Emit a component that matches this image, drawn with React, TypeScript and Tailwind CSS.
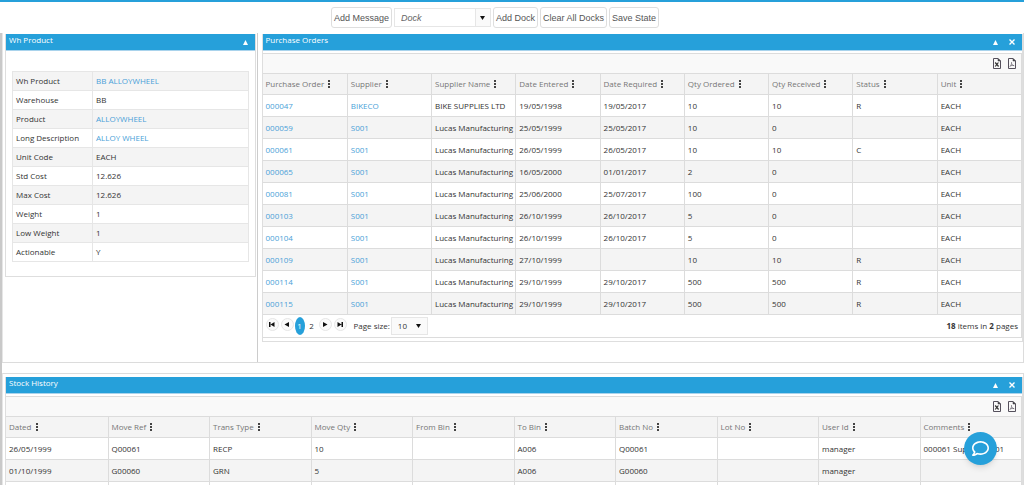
import { ReactNode } from 'react'
import { FaRegComment } from 'react-icons/fa'

const product = [
    { label: 'Wh Product', value: 'BB ALLOYWHEEL', link: true },
    { label: 'Warehouse', value: 'BB' },
    { label: 'Product', value: 'ALLOYWHEEL', link: true },
    { label: 'Long Description', value: 'ALLOY WHEEL', link: true },
    { label: 'Unit Code', value: 'EACH' },
    { label: 'Std Cost', value: '12.626' },
    { label: 'Max Cost', value: '12.626' },
    { label: 'Weight', value: '1' },
    { label: 'Low Weight', value: '1' },
    { label: 'Actionable', value: 'Y' },
]

const orderColumns = ['Purchase Order', 'Supplier', 'Supplier Name', 'Date Entered', 'Date Required', 'Qty Ordered', 'Qty Received', 'Status', 'Unit']

const orders = [
    ['000047', 'BIKECO', 'BIKE SUPPLIES LTD', '19/05/1998', '19/05/2017', '10', '10', 'R', 'EACH'],
    ['000059', 'S001', 'Lucas Manufacturing', '25/05/1999', '25/05/2017', '10', '0', '', 'EACH'],
    ['000061', 'S001', 'Lucas Manufacturing', '26/05/1999', '26/05/2017', '10', '10', 'C', 'EACH'],
    ['000065', 'S001', 'Lucas Manufacturing', '16/05/2000', '01/01/2017', '2', '0', '', 'EACH'],
    ['000081', 'S001', 'Lucas Manufacturing', '25/06/2000', '25/07/2017', '100', '0', '', 'EACH'],
    ['000103', 'S001', 'Lucas Manufacturing', '26/10/1999', '26/10/2017', '5', '0', '', 'EACH'],
    ['000104', 'S001', 'Lucas Manufacturing', '26/10/1999', '26/10/2017', '5', '0', '', 'EACH'],
    ['000109', 'S001', 'Lucas Manufacturing', '27/10/1999', '', '10', '10', 'R', 'EACH'],
    ['000114', 'S001', 'Lucas Manufacturing', '29/10/1999', '29/10/2017', '500', '500', 'R', 'EACH'],
    ['000115', 'S001', 'Lucas Manufacturing', '29/10/1999', '29/10/2017', '500', '500', 'R', 'EACH'],
]

const historyColumns = ['Dated', 'Move Ref', 'Trans Type', 'Move Qty', 'From Bin', 'To Bin', 'Batch No', 'Lot No', 'User Id', 'Comments']

const history = [
    ['26/05/1999', 'Q00061', 'RECP', '10', '', 'A006', 'Q00061', '', 'manager', '000061 Supplier S001'],
    ['01/10/1999', 'G00060', 'GRN', '5', '', 'A006', 'G00060', '', 'manager', ''],
    ['', '', '', '', '', '', '', '', '', ''],
]

function ExcelIcon() {
    return (
        <svg width="8" height="11" viewBox="0 0 8 11" fill="none" stroke="#55505c">
            <path d="M.5 .5h4.5l2.5 2.5v7.5h-7z" />
            <path d="M5 .5v2.500h2.500z" fill="#333" strokeWidth=".6" />
            <path d="M2.200 4.500l3.400 4M5.400 4.500L2.200 8.500" strokeWidth="1.200" stroke="#333" />
        </svg>
    )
}

function PdfIcon() {
    return (
        <svg width="8" height="11" viewBox="0 0 8 11" fill="none" stroke="#55505c">
            <path d="M.5 .5h4.5l2.5 2.5v7.5h-7z" />
            <path d="M5 .5v2.500h2.500z" fill="#333" strokeWidth=".6" />
            <path d="M3.5 4c.4 1.800-.6 3.800-1.800 4.700M3.600 5.500c.5 1.400 1.500 2.100 2.700 2.200M2.200 8c1.100-.6 2.500-.8 3.800-.5" strokeWidth=".6" />
        </svg>
    )
}

interface DockProps {
    title: string
    closable?: boolean
    children: ReactNode
}

function Dock({ title, closable, children }: DockProps) {
    return (
        <section className="border border-t-0 border-[#dedede] bg-white pb-[3px]">
            <header className="flex h-[17px] items-start justify-between border-b border-[#a9d3ec] bg-[#26a0da] pl-[3px] pr-[7px] text-white">
                <h2 className="leading-3">{title}</h2>
                <div className="flex h-4 items-center gap-[11px]">
                    <button aria-label="Collapse" className="block">
                        <svg width="5" height="5" viewBox="0 0 5 5" fill="currentColor"><path d="M2.5 0L5 5H0z" /></svg>
                    </button>
                    {closable && (
                        <button aria-label="Close" className="block">
                            <svg width="6" height="6" viewBox="0 0 6 6" stroke="currentColor" strokeWidth="1.400"><path d="M.5 .5l5 5M5.500 .5l-5 5" /></svg>
                        </button>
                    )}
                </div>
            </header>
            {children}
        </section>
    )
}

interface GridProps {
    columns: string[]
    rows: string[][]
    links?: number
    footer?: ReactNode
}

function Grid({ columns, rows, links = 0, footer }: GridProps) {
    return (
        <div className="mt-[2px] border-y border-r border-[#dcdcdc]">
            <div className="flex h-[19px] items-center justify-end gap-[7px] bg-[#f9f9f9] pr-[5px]">
                <button aria-label="Export to Excel"><ExcelIcon /></button>
                <button aria-label="Export to PDF"><PdfIcon /></button>
            </div>
            <table className="w-full table-fixed border-separate border-spacing-0">
                <thead className="bg-[#f4f4f4] text-[#767676]">
                    <tr>
                        {columns.map(name => (
                            <th key={name} scope="col" className="h-[22px] whitespace-nowrap border-y border-l border-[#dcdcdc] px-[3px] py-0 text-left font-normal first:border-l-0">
                                <span className="flex items-center gap-1">
                                    {name}
                                    <svg width="2" height="8" viewBox="0 0 2 8" fill="#444"><path d="M0 0h2v2H0zM0 3h2v2H0zM0 6h2v2H0z" /></svg>
                                </span>
                            </th>
                        ))}
                    </tr>
                </thead>
                <tbody>
                    {rows.map((row, index) => (
                        <tr key={index} className={index % 2 === 0 ? 'bg-white' : 'bg-[#f4f4f4]'}>
                            {row.map((cell, i) => (
                                <td key={i} className="h-[22px] whitespace-nowrap border-b border-l border-[#dcdcdc] px-[3px] py-0 first:border-l-0">
                                    {i < links ? <a href="#" className="text-[#4a9fd8]">{cell}</a> : cell}
                                </td>
                            ))}
                        </tr>
                    ))}
                </tbody>
            </table>
            {footer}
        </div>
    )
}

function PageButton({ label, path }: { label: string, path: string }) {
    return (
        <button aria-label={label} className="flex size-[13px] items-center justify-center rounded-full border border-[#e6e6e6] bg-[#fafafa]">
            <svg width="6" height="5" viewBox="0 0 6 5" fill="#111"><path d={path} /></svg>
        </button>
    )
}

function Pager() {
    return (
        <div className="flex h-[22px] items-center justify-between px-[3px]">
            <div className="flex items-center">
                <div className="flex gap-[2px] pb-1">
                    <PageButton label="First page" path="M0 0h1.500v5H0zM5.500 0v5L1.500 2.500z" />
                    <PageButton label="Previous page" path="M5 0v5L.5 2.500z" />
                </div>
                <button className="ml-px h-[18px] w-[10px] rounded-[50%] bg-[#26a0da] text-white">1</button>
                <button className="mx-1 w-[6px]">2</button>
                <div className="flex gap-[2px] pb-1">
                    <PageButton label="Next page" path="M1 0v5l4.500-2.500z" />
                    <PageButton label="Last page" path="M.5 0v5l4-2.500zM4.500 0H6v5H4.500z" />
                </div>
                <label htmlFor="page-size" className="ml-[7px] mr-px">Page size:</label>
                <div className="relative">
                    <select id="page-size" defaultValue="10" className="block h-[18px] w-[37px] appearance-none border border-[#e6e6e6] bg-[#fafafa] pl-[6px]">
                        <option>10</option>
                        <option>20</option>
                        <option>50</option>
                    </select>
                    <svg className="pointer-events-none absolute right-[7px] top-[7px]" width="5" height="4" viewBox="0 0 5 4" fill="#111"><path d="M0 0h5L2.500 4z" /></svg>
                </div>
            </div>
            <div><b>18</b> items in <b>2</b> pages</div>
        </div>
    )
}

function ToolbarButton({ children }: { children: ReactNode }) {
    return (
        <button className="h-[21px] rounded-[3px] border border-[#dedede] bg-white px-[2px] text-[#555]">{children}</button>
    )
}

export default function App() {
    return (
        <div className="h-screen overflow-hidden bg-white font-['Open_Sans','Noto_Sans',sans-serif] text-[8px] leading-3 text-[#333]">
            <div className="flex h-[33px] items-start justify-center gap-[2px] border-t-2 border-[#26a0da] pr-[34px] pt-[5px] font-['Liberation_Sans',Arial,sans-serif] text-[9px]">
                <ToolbarButton>Add Message</ToolbarButton>
                <div className="mt-px flex h-[19px] w-[97px] border border-[#e6e6e6]">
                    <input aria-label="Dock" placeholder="Dock" className="min-w-0 flex-1 pl-[6px] italic outline-none placeholder:text-[#666]" />
                    <button aria-label="Open dock list" className="flex w-[15px] items-center justify-center border-l border-[#e6e6e6] bg-[#fafafa]">
                        <svg width="5" height="4" viewBox="0 0 5 4" fill="#111"><path d="M0 0h5L2.500 4z" /></svg>
                    </button>
                </div>
                <ToolbarButton>Add Dock</ToolbarButton>
                <ToolbarButton>Clear All Docks</ToolbarButton>
                <ToolbarButton>Save State</ToolbarButton>
            </div>
            <main className="min-h-full border-l-2 border-[#c9c9c9]">
                <div className="flex border-b border-[#dcdcdc]">
                    <div className="w-1/4 border-x border-l-[#e6e6e6] border-r-[#cccccc] pl-[2px] pr-px pt-px">
                        <Dock title="Wh Product">
                            <div className="px-[6px] pb-[11px] pt-[20px]">
                                <table className="w-full border-collapse">
                                    <tbody>
                                        {product.map((item, index) => (
                                            <tr key={item.label} className={index % 2 === 0 ? 'bg-[#f4f4f4]' : 'bg-white'}>
                                                <th scope="row" className="h-[19px] w-[80px] whitespace-nowrap border border-[#e6e6e6] px-[3px] py-0 text-left font-normal">{item.label}</th>
                                                <td className="border border-[#e6e6e6] px-[3px] py-0">
                                                    {item.link ? <a href="#" className="text-[#4a9fd8]">{item.value}</a> : item.value}
                                                </td>
                                            </tr>
                                        ))}
                                    </tbody>
                                </table>
                            </div>
                        </Dock>
                    </div>
                    <div className="min-w-0 flex-1 border-r border-[#dcdcdc] pb-[20px] pl-1 pt-px">
                        <Dock title="Purchase Orders" closable>
                            <Grid columns={orderColumns} rows={orders} links={2} footer={<Pager />} />
                        </Dock>
                    </div>
                </div>
                <div className="mt-[10px] border border-[#dcdcdc] border-l-[#e6e6e6] pb-[20px] pl-[2px] pt-[3px]">
                    <Dock title="Stock History" closable>
                        <Grid columns={historyColumns} rows={history} />
                    </Dock>
                </div>
            </main>
            <button aria-label="Open chat" className="fixed bottom-5 right-[27px] flex size-[33px] items-center justify-center rounded-full bg-[#26a0da] text-white shadow-md">
                <FaRegComment size={17} />
            </button>
        </div>
    )
}
